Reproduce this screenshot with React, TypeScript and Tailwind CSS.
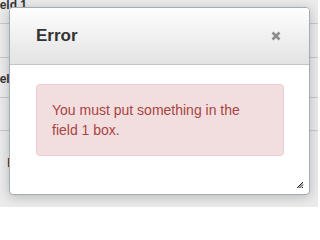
const rowText = "text-[12px] font-bold text-[#333] leading-[16px]";

function CloseIcon() {
  return (
    <svg width="10" height="10" viewBox="0 0 10 10" className="block">
      <path d="M1.5 1.5 L8.5 8.5 M8.5 1.5 L1.5 8.5" stroke="#8c8c8c" strokeWidth="2.6" strokeLinecap="butt" />
    </svg>
  );
}

function ResizeGrip() {
  return (
    <svg width="8" height="8" viewBox="0 0 8 8" className="block">
      <path d="M7 1 L1 7 M7 3.5 L3.5 7 M7 6 L6 7" stroke="#222" strokeWidth="1" />
      <path d="M7 2 L2 7 M7 4.5 L4.5 7" stroke="#888" strokeWidth="0.7" />
    </svg>
  );
}

export default function App() {
  return (
    <div
      className="relative w-[318px] h-[207px] overflow-hidden bg-[#ebebeb]"
      style={{ fontFamily: '"Liberation Sans", Arial, sans-serif' }}
    >
      {/* page behind the dialog */}
      <div className="flex flex-col">
        <div className="h-[24px] border-b border-[#c9c9c9]">
          <div className={`${rowText} ml-[-11px] mt-[-3px]`}>Field 1</div>
        </div>
        <div className="h-[34px] border-b border-[#c9c9c9]" />
        <div className="h-[40px] border-b border-[#c9c9c9] flex items-center">
          <div className={`${rowText} ml-[-11px] mt-[2px]`}>Field 2</div>
        </div>
        <div className="h-[33px] border-b border-[#c9c9c9]" />
        <div className="h-[40px] flex items-end">
          <div className="text-[12px] text-[#333] leading-[16px] pl-[7px]">E</div>
        </div>
      </div>

      {/* dialog */}
      <div className="absolute left-[9px] top-[7px] w-[301px] h-[188px] bg-white border border-[#a3acb5] rounded-[4px] shadow-[0_2px_12px_rgba(0,0,0,0.22)] overflow-hidden flex flex-col">
        <div className="h-[57px] shrink-0 flex items-center justify-between pl-[26px] pr-[28px] border-b border-[#c4c4c4] bg-gradient-to-b from-[#fefefe] to-[#e3e3e3]">
          <span className="text-[17px] font-bold text-[#333]">Error</span>
          <CloseIcon />
        </div>
        <div className="relative flex-1 pt-[19px] pl-[26px]">
          <div className="w-[248px] h-[72px] px-[15px] py-[15px] bg-[#f2dede] border border-[#ebccd1] rounded-[4px] text-[14px] leading-[20px] text-[#a94442]">
            You must put something in the field 1 box.
          </div>
          <div className="absolute right-[5px] bottom-[5px]">
            <ResizeGrip />
          </div>
        </div>
      </div>
    </div>
  );
}
